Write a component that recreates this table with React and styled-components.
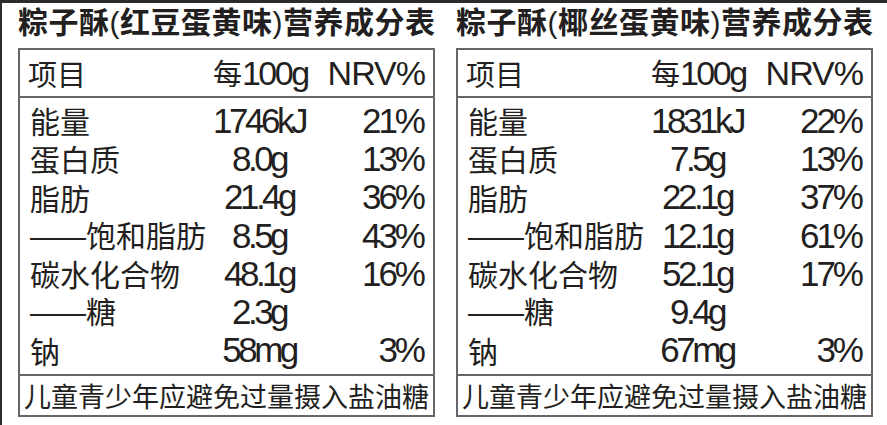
import React from "react";
import styled, { createGlobalStyle } from "styled-components";

const Global = createGlobalStyle`
  html, body { margin: 0; padding: 0; background: #ffffff; }
  body { font-family: "Liberation Sans", "Noto Sans CJK SC", sans-serif; color: #231f20; }
`;

const Page = styled.div`
  width: 887px;
  height: 425px;
  box-sizing: border-box;
  border-top: 3px solid #2b2b2b;
  border-left: 2px solid #2b2b2b;
  padding-left: 16px;
  display: flex;
  gap: 21px;
  background: #fff;
  overflow: hidden;
`;

const Panel = styled.section`
  width: 417px;
  display: flex;
  flex-direction: column;
`;

const Title = styled.h1`
  margin: 0;
  height: 45px;
  box-sizing: border-box;
  padding-bottom: 6px;
  display: flex;
  align-items: center;
  font-family: "Liberation Sans", "Noto Sans CJK SC", sans-serif;
  font-weight: 700;
  font-size: 30px;
  letter-spacing: 0.5px;
  line-height: 1;
  white-space: nowrap;
  color: #231f20;
`;

const Paren = styled.span`
  font-weight: 400;
`;

const Table = styled.div`
  border: 2px solid #666;
  display: flex;
  flex-direction: column;
`;

const Header = styled.div`
  height: 46px;
  border-bottom: 2px solid #666;
  display: flex;
  align-items: center;
  justify-content: space-between;
  padding: 0 8px 0 8px;
  line-height: 1;
`;

const HeadLabel = styled.span`
  font-family: "Noto Sans CJK SC", sans-serif;
  font-size: 29px;
`;

const HeadRight = styled.span`
  display: flex;
  align-items: center;
  gap: 20px;
`;

const HeadPer = styled.span`
  font-size: 34px;
  letter-spacing: -2.5px;
  & > b {
    font-weight: 400;
    font-family: "Noto Sans CJK SC", sans-serif;
    font-size: 29px;
    letter-spacing: 0;
  }
`;

const HeadNrv = styled.span`
  font-size: 34px;
  letter-spacing: -1px;
`;

const Body = styled.div`
  padding: 3px 0 5px;
  border-bottom: 2px solid #666;
`;

const Row = styled.div`
  height: 38.3px;
  display: grid;
  grid-template-columns: 174px 110px 1fr;
  align-items: center;
  padding: 0 10px;
  line-height: 1;
`;

const Name = styled.span`
  font-family: "Noto Sans CJK SC", sans-serif;
  font-size: 30px;
  line-height: 30px;
  white-space: nowrap;
`;

const Dash = styled.span`
  font-family: "Liberation Sans", sans-serif;
  letter-spacing: -4px;
  margin-right: 4px;
`;

const Value = styled.span`
  font-size: 35px;
  letter-spacing: -3.5px;
  text-align: center;
  white-space: nowrap;
`;

const Nrv = styled.span`
  font-size: 35px;
  letter-spacing: -3px;
  text-align: right;
  white-space: nowrap;
`;

const Footer = styled.div`
  height: 39px;
  display: flex;
  align-items: center;
  justify-content: center;
  font-family: "Noto Sans CJK SC", sans-serif;
  font-size: 27px;
  line-height: 1;
  white-space: nowrap;
`;

const tables = [
  {
    name: "红豆蛋黄味",
    rows: [
      ["能量", "1746kJ", "21%"],
      ["蛋白质", "8.0g", "13%"],
      ["脂肪", "21.4g", "36%"],
      ["饱和脂肪", "8.5g", "43%", true],
      ["碳水化合物", "48.1g", "16%"],
      ["糖", "2.3g", "", true],
      ["钠", "58mg", "3%"],
    ],
  },
  {
    name: "椰丝蛋黄味",
    rows: [
      ["能量", "1831kJ", "22%"],
      ["蛋白质", "7.5g", "13%"],
      ["脂肪", "22.1g", "37%"],
      ["饱和脂肪", "12.1g", "61%", true],
      ["碳水化合物", "52.1g", "17%"],
      ["糖", "9.4g", "", true],
      ["钠", "67mg", "3%"],
    ],
  },
];

function NutritionPanel({ data }) {
  return (
    <Panel>
      <Title>
        粽子酥<Paren>(</Paren>
        {data.name}
        <Paren>)</Paren>营养成分表
      </Title>
      <Table>
        <Header>
          <HeadLabel>项目</HeadLabel>
          <HeadRight>
            <HeadPer>
              <b>每</b>100g
            </HeadPer>
            <HeadNrv>NRV%</HeadNrv>
          </HeadRight>
        </Header>
        <Body>
          {data.rows.map(([name, value, nrv, sub]) => (
            <Row key={name}>
              <Name>
                {sub && <Dash>——</Dash>}
                {name}
              </Name>
              <Value>{value}</Value>
              <Nrv>{nrv}</Nrv>
            </Row>
          ))}
        </Body>
        <Footer>儿童青少年应避免过量摄入盐油糖</Footer>
      </Table>
    </Panel>
  );
}

export default function App() {
  return (
    <>
      <Global />
      <Page>
        {tables.map((t) => (
          <NutritionPanel key={t.name} data={t} />
        ))}
      </Page>
    </>
  );
}
